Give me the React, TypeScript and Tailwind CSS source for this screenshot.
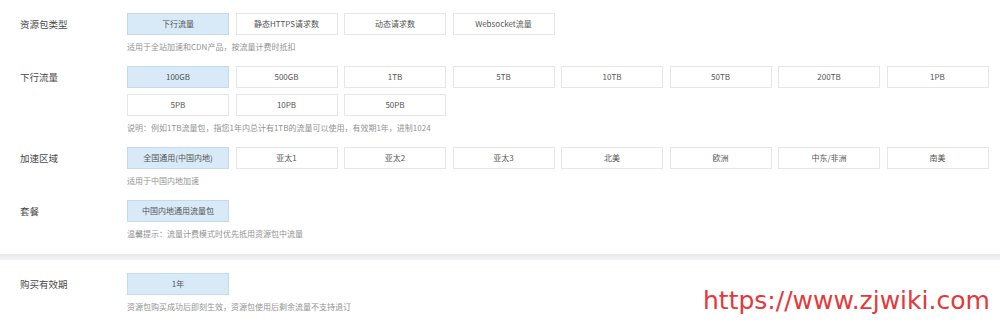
const font = { fontFamily: '"Noto Sans CJK SC", "Noto Sans", sans-serif' };

type Row = { label: string; options: string[]; active: string; hint: string };

const top: Row[] = [
  { label: "资源包类型", options: ["下行流量", "静态HTTPS请求数", "动态请求数", "Websocket流量"], active: "下行流量", hint: "适用于全站加速和CDN产品，按流量计费时抵扣" },
  { label: "下行流量", options: ["100GB", "500GB", "1TB", "5TB", "10TB", "50TB", "200TB", "1PB", "5PB", "10PB", "50PB"], active: "100GB", hint: "说明：例如1TB流量包，指您1年内总计有1TB的流量可以使用，有效期1年，进制1024" },
  { label: "加速区域", options: ["全国通用(中国内地)", "亚太1", "亚太2", "亚太3", "北美", "欧洲", "中东/非洲", "南美"], active: "全国通用(中国内地)", hint: "适用于中国内地加速" },
  { label: "套餐", options: ["中国内地通用流量包"], active: "中国内地通用流量包", hint: "温馨提示：流量计费模式时优先抵用资源包中流量" },
];

function OptionRow({ row, last }: { row: Row; last?: boolean }) {
  return (
    <div className={`flex ${last ? "" : "mb-[13px]"}`}>
      <div className="w-[127px] shrink-0 pl-[20px] h-[22px] flex items-center text-[9.5px] text-[#4a4a4a]">{row.label}</div>
      <div className="flex flex-col">
        <div className="flex flex-wrap w-[870px] gap-x-[6.5px] gap-y-[6px]">
          {row.options.map((o) => (
            <div
              key={o}
              className={`w-[102px] h-[22px] flex items-center justify-center text-[8px] text-[#555] border ${
                o === row.active ? "bg-[#d8e9f7] border-[#c3dbef]" : "bg-white border-[#e6e6e6]"
              }`}
            >
              {o}
            </div>
          ))}
        </div>
        <div className="mt-[6px] h-[12px] leading-[12px] text-[8px] text-[#929292]">{row.hint}</div>
      </div>
    </div>
  );
}

export default function App() {
  return (
    <div className="w-[1000px] h-[322px] bg-white overflow-hidden relative" style={font}>
      <div className="pt-[13px] pb-[14px] bg-white">
        {top.map((r, i) => (
          <OptionRow key={r.label} row={r} last={i === top.length - 1} />
        ))}
      </div>
      <div className="h-[6px] bg-gradient-to-b from-[#e8e9eb] to-[#f3f4f5]" />
      <div className="pt-[13px] bg-white">
        <OptionRow row={{ label: "购买有效期", options: ["1年"], active: "1年", hint: "资源包购买成功后即刻生效，资源包使用后剩余流量不支持退订" }} last />
      </div>
      <div
        className="absolute left-[703px] top-[286px] text-[25px] leading-[30px] text-[#e5383b]"
        style={{ fontFamily: '"DejaVu Sans", sans-serif' }}
      >
        https://www.zjwiki.com
      </div>
    </div>
  );
}
